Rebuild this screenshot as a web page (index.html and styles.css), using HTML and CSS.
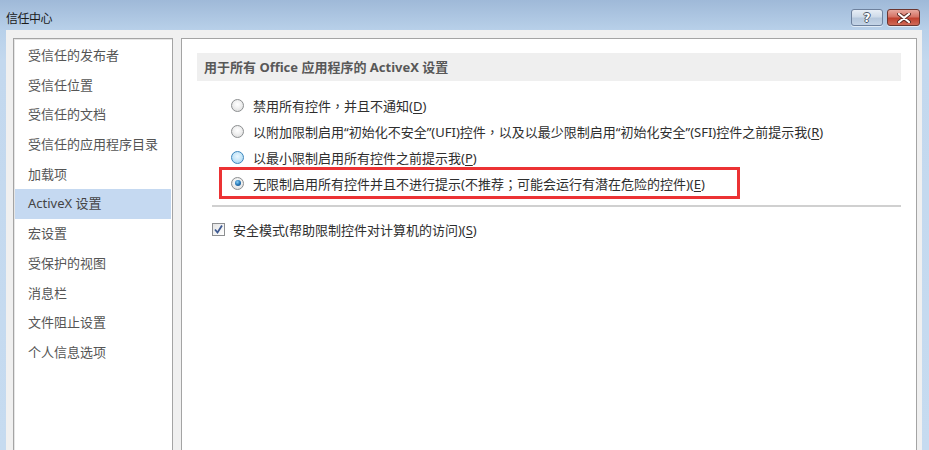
FILE: index.html
```html
<!DOCTYPE html>
<html lang="zh-CN">
<head>
<meta charset="utf-8">
<title>信任中心</title>
<link rel="stylesheet" href="styles.css">
</head>
<body>
<div class="window">
  <div class="titlebar">
    <span class="title">信任中心</span>
    <div class="caption-btns">
      <div class="cap help"><span class="q">?</span></div>
      <div class="cap close">
        <svg width="14" height="10" viewBox="0 0 14 10">
          <path d="M2 1 L12 9 M12 1 L2 9" stroke="#5a2a24" stroke-width="4" stroke-linecap="round"/>
          <path d="M2 1 L12 9 M12 1 L2 9" stroke="#ffffff" stroke-width="2.2" stroke-linecap="round"/>
        </svg>
      </div>
    </div>
  </div>
  <div class="client">
    <nav class="sidebar">
      <ul class="nav-list">
        <li class="nav-item">受信任的发布者</li>
        <li class="nav-item">受信任位置</li>
        <li class="nav-item">受信任的文档</li>
        <li class="nav-item">受信任的应用程序目录</li>
        <li class="nav-item">加载项</li>
        <li class="nav-item selected">ActiveX 设置</li>
        <li class="nav-item">宏设置</li>
        <li class="nav-item">受保护的视图</li>
        <li class="nav-item">消息栏</li>
        <li class="nav-item">文件阻止设置</li>
        <li class="nav-item">个人信息选项</li>
      </ul>
    </nav>
    <main class="content">
      <div class="section-header">用于所有 Office 应用程序的 ActiveX 设置</div>
      <div class="options">
        <div class="radio-row"><span class="radio"></span><span class="label">禁用所有控件<span class="punct" lang="zh-TW">，</span>并且不通知(<u>D</u>)</span></div>
        <div class="radio-row"><span class="radio"></span><span class="label">以附加限制启用“初始化不安全”(UFI)控件<span class="punct" lang="zh-TW">，</span>以及以最少限制启用“初始化安全”(SFI)控件之前提示我(<u>R</u>)</span></div>
        <div class="radio-row"><span class="radio hover"></span><span class="label">以最小限制启用所有控件之前提示我(<u>P</u>)</span></div>
        <div class="radio-row highlighted"><span class="radio checked"></span><span class="label">无限制启用所有控件并且不进行提示(不推荐<span class="punct" lang="zh-TW">；</span>可能会运行有潜在危险的控件)(<u>E</u>)</span></div>
      </div>
      <div class="sep"></div>
      <div class="check-row">
        <span class="checkbox">
          <svg width="11" height="11" viewBox="0 0 11 11"><path d="M2 5.5 L4.5 8.5 L9 1.5" fill="none" stroke="#3e5a92" stroke-width="1.8"/></svg>
        </span>
        <span class="label">安全模式(帮助限制控件对计算机的访问)(<u>S</u>)</span>
      </div>
    </main>
  </div>
</div>
</body>
</html>
```

FILE: styles.css
```css
* { box-sizing: border-box; }

html, body {
  margin: 0;
  padding: 0;
  height: 450px;
  overflow: hidden;
}

body {
  font-family: "Noto Sans", "Noto Sans CJK SC", sans-serif;
  font-size: 13px;
  background: #c3d8ee;
}

.window {
  width: 929px;
  height: 450px;
  display: flex;
  flex-direction: column;
  background: linear-gradient(to bottom, #9fb9d8 0px, #b8d0e9 30px, #c3d8ee 60px, #c6dbf0 100%);
}

.titlebar {
  height: 30px;
  flex: none;
  display: flex;
  align-items: flex-start;
  justify-content: space-between;
  padding: 0 9px 0 6px;
}

.title {
  margin-top: 10px;
  font-family: "Noto Sans CJK SC", sans-serif;
  font-size: 12px;
  line-height: 16px;
  color: #1b1b1b;
  letter-spacing: -0.5px;
}

.caption-btns {
  display: flex;
  gap: 4px;
  margin-top: 9px;
}

.cap {
  height: 17px;
  border-radius: 3px;
  display: flex;
  align-items: center;
  justify-content: center;
  box-shadow: 0 1px 0 rgba(255,255,255,0.6);
}

.help {
  width: 32px;
  border: 1px solid #6e819d;
  background: linear-gradient(to bottom, #e8eef6 0%, #cfdbe9 45%, #b5c7dc 55%, #c4d4e6 100%);
}

.help .q {
  font-family: "DejaVu Sans", sans-serif;
  font-weight: bold;
  font-size: 12px;
  line-height: 12px;
  color: #ffffff;
  text-shadow: -1px 0 #4b5668, 1px 0 #4b5668, 0 -1px #4b5668, 0 1px #4b5668;
}

.close {
  width: 33px;
  border: 1px solid #6c3630;
  background: linear-gradient(to bottom, #e7a99f 0%, #d57365 45%, #c0412f 55%, #cf6a57 100%);
}

.client {
  flex: 1;
  margin: 0 7px 0 6px;
  background: #f0f0f0;
  padding: 8px 5px 0 7px;
  display: flex;
  gap: 8px;
  min-height: 0;
}

.sidebar {
  width: 160px;
  flex: none;
  background: #ffffff;
  border: 1px solid #a4a4a4;
  border-bottom: none;
  box-shadow: inset 1px 1px 0 #e6e6e6;
  padding: 2px 1px 0 1px;
}

.nav-list {
  list-style: none;
  margin: 0;
  padding: 0;
}

.nav-item {
  height: 29.7px;
  line-height: 29.7px;
  padding-left: 13px;
  color: #555;
  font-size: 13px;
  white-space: nowrap;
}

.nav-item.selected {
  background: #c5d9f1;
  color: #444;
}

.content {
  flex: 1;
  background: #ffffff;
  border: 1px solid #a4a4a4;
  border-bottom: none;
  padding-top: 14px;
  display: flex;
  flex-direction: column;
  align-items: flex-start;
}

.section-header {
  align-self: stretch;
  margin: 0 15px 0 15px;
  height: 28px;
  line-height: 28px;
  padding-left: 7px;
  background: #efefef;
  color: #585858;
  font-weight: bold;
  font-size: 13px;
}

.options {
  margin-top: 11px;
  padding-left: 37px;
  display: flex;
  flex-direction: column;
  align-items: flex-start;
}

.radio-row {
  height: 26px;
  display: flex;
  align-items: center;
  padding-left: 12px;
  color: #2e2e2e;
  white-space: nowrap;
}

.radio-row.highlighted {
  height: 32px;
  width: 521px;
  margin-top: -3px;
  padding-left: 9px;
  border: 3px solid #ec3234;
}

.punct {
  font-family: "Noto Sans CJK TC", sans-serif;
}

.radio {
  width: 13px;
  height: 13px;
  flex: none;
  border-radius: 50%;
  border: 1px solid #8c8e90;
  background: radial-gradient(circle at 50% 40%, #ffffff 0%, #f2f2f2 40%, #d6d6d6 100%);
  margin-right: 9px;
  display: flex;
  align-items: center;
  justify-content: center;
}

.radio.hover {
  border-color: #3d86bd;
  background: radial-gradient(circle at 50% 40%, #eaf7ff 0%, #c6e6f8 50%, #97cdee 100%);
}

.radio.checked::after {
  content: "";
  width: 6px;
  height: 6px;
  border-radius: 50%;
  background: radial-gradient(circle at 40% 35%, #8bd0f4 0%, #2d7fbf 45%, #0e3d6e 100%);
}

.label u {
  text-decoration: underline;
  text-underline-offset: 2px;
}

.sep {
  align-self: stretch;
  margin: 6px 15px 0 30px;
  height: 2px;
  background: #d0d0d0;
}

.check-row {
  margin-top: 12px;
  margin-left: 30px;
  height: 20px;
  display: flex;
  align-items: center;
  color: #2e2e2e;
  white-space: nowrap;
}

.checkbox {
  width: 13px;
  height: 13px;
  flex: none;
  border: 1px solid #8c8e90;
  background: linear-gradient(135deg, #e4e4e4 0%, #ffffff 100%);
  margin-right: 8px;
  display: flex;
  align-items: center;
  justify-content: center;
}
```
